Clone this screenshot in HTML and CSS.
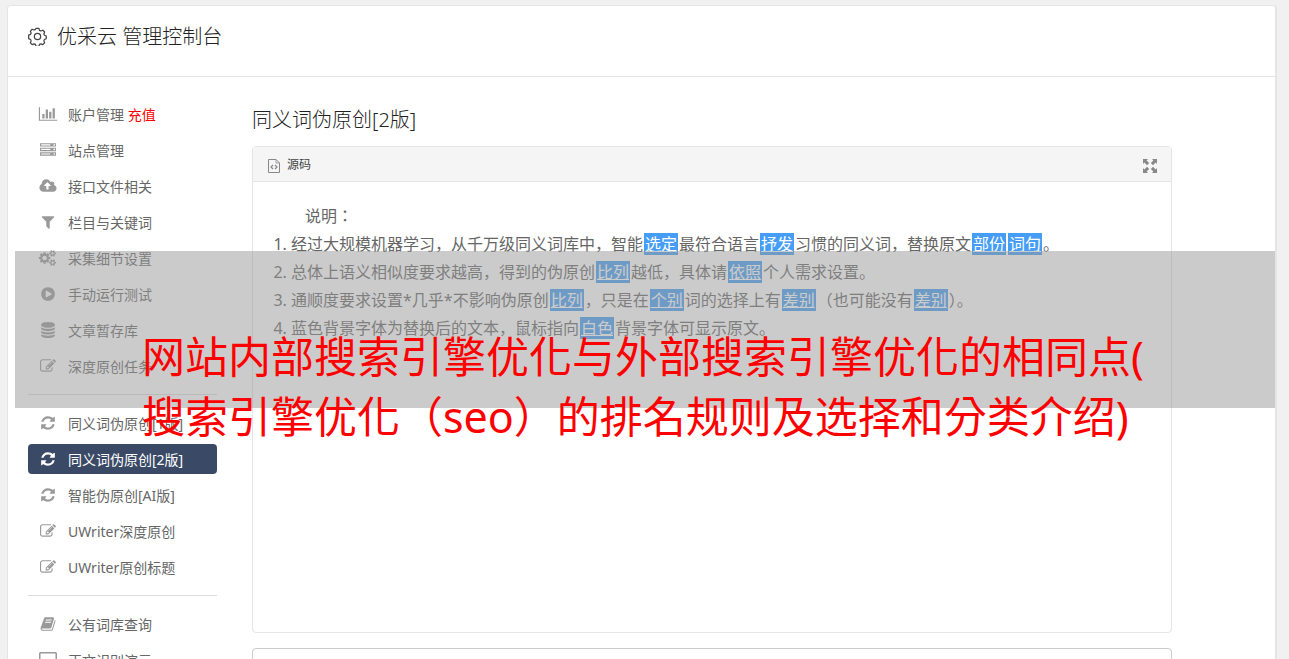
FILE: index.html
```html
<!DOCTYPE html>
<html lang="en">
<head>
    <meta charset="UTF-8">
    <meta name="viewport" content="width=device-width, initial-scale=1.0">
    <title>优采云 管理控制台</title>
    <link rel="stylesheet" href="styles.css">
</head>
<body>
    <!-- icon sprite -->
    <svg class="sprite" aria-hidden="true">
        <symbol id="i-chart" viewBox="0 0 2048 1792"><path d="M640 896v512h-256v-512h256zm384-512v1024h-256v-1024h256zm1024 1152v128h-2048v-1536h128v1408h1920zm-640-896v768h-256v-768h256zm384-384v1152h-256v-1152h256z"/></symbol>
        <symbol id="i-server" viewBox="0 0 1792 1792"><path d="M128 1408h1024v-128h-1024v128zm0-512h1024v-128h-1024v128zm1568 448q0-40-28-68t-68-28-68 28-28 68 28 68 68 28 68-28 28-68zm-1568-960h1024v-128h-1024v128zm1568 448q0-40-28-68t-68-28-68 28-28 68 28 68 68 28 68-28 28-68zm0-512q0-40-28-68t-68-28-68 28-28 68 28 68 68 28 68-28 28-68zm96 832v384h-1792v-384h1792zm0-512v384h-1792v-384h1792zm0-512v384h-1792v-384h1792z"/></symbol>
        <symbol id="i-cloud" viewBox="0 0 1920 1792"><path d="M1280 864q0-14-9-23l-352-352q-9-9-23-9t-23 9l-351 351q-10 12-10 24 0 14 9 23t23 9h224v352q0 13 9.5 22.5t22.5 9.5h192q13 0 22.5-9.5t9.5-22.5v-352h224q13 0 22.5-9.5t9.5-22.5zm640 288q0 159-112.5 271.5t-271.5 112.5h-1088q-185 0-316.5-131.5t-131.5-316.5q0-130 70-240t188-165q-2-30-2-43 0-212 150-362t362-150q156 0 285.5 87t188.5 231q71-62 166-62 106 0 181 75t75 181q0 76-41 138 130 31 213.5 135.5t83.5 238.5z"/></symbol>
        <symbol id="i-filter" viewBox="0 0 1792 1792"><path d="M1595 295q17 41-14 70l-493 493v742q0 42-39 59-13 5-25 5-27 0-45-19l-256-256q-19-19-19-45v-486l-493-493q-31-29-14-70 17-39 59-39h1280q42 0 59 39z"/></symbol>
        <symbol id="i-cogs" viewBox="0 0 1920 1792"><path d="M832 896q0-106-75-181t-181-75-181 75-75 181 75 181 181 75 181-75 75-181zm768 512q0-52-38-90t-90-38-90 38-38 90q0 53 37.5 90.5t90.5 37.5 90.5-37.5 37.5-90.5zm0-1024q0-52-38-90t-90-38-90 38-38 90q0 53 37.5 90.5t90.5 37.5 90.5-37.5 37.5-90.5zm-384 421v185q0 10-7 19.5t-16 10.5l-155 24q-11 35-32 76 34 48 90 115 7 11 7 20 0 12-7 19-23 30-82.5 89.5t-78.5 59.5q-11 0-21-7l-115-90q-37 19-77 31-11 108-23 155-7 24-30 24h-186q-11 0-20-7.5t-10-17.5l-23-153q-34-10-75-31l-118 89q-7 7-20 7-11 0-21-8-144-133-144-160 0-9 7-19 10-14 41-53t47-61q-23-44-35-82l-152-24q-10-1-17-9.5t-7-19.5v-185q0-10 7-19.5t16-10.5l155-24q11-35 32-76-34-48-90-115-7-11-7-20 0-12 7-20 22-30 82-89t79-59q11 0 21 7l115 90q34-18 77-32 11-108 23-154 7-24 30-24h186q11 0 20 7.5t10 17.5l23 153q34 10 75 31l118-89q8-7 20-7 11 0 21 8 144 133 144 160 0 8-7 19-12 16-42 54t-45 60q23 48 34 82l152 23q10 2 17 10.5t7 19.5zm640 533v140q0 16-149 31-12 27-30 52 51 113 51 138 0 4-4 7-122 71-124 71-8 0-46-47t-52-68q-20 2-30 2t-30-2q-14 21-52 68t-46 47q-2 0-124-71-4-3-4-7 0-25 51-138-18-25-30-52-149-15-149-31v-140q0-16 149-31 13-29 30-52-51-113-51-138 0-4 4-7 4-2 35-20t59-34 30-16q8 0 46 46.5t52 67.5q20-2 30-2t30 2q51-71 92-112l6-2q4 0 124 70 4 3 4 7 0 25-51 138 17 23 30 52 149 15 149 31zm0-1024v140q0 16-149 31-12 27-30 52 51 113 51 138 0 4-4 7-122 71-124 71-8 0-46-47t-52-68q-20 2-30 2t-30-2q-14 21-52 68t-46 47q-2 0-124-71-4-3-4-7 0-25 51-138-18-25-30-52-149-15-149-31v-140q0-16 149-31 13-29 30-52-51-113-51-138 0-4 4-7 4-2 35-20t59-34 30-16q8 0 46 46.5t52 67.5q20-2 30-2t30 2q51-71 92-112l6-2q4 0 124 70 4 3 4 7 0 25-51 138 17 23 30 52 149 15 149 31z"/></symbol>
        <symbol id="i-play" viewBox="0 0 1792 1792"><path d="M896 128q209 0 385.5 103t279.5 279.5 103 385.5-103 385.5-279.5 279.5-385.5 103-385.5-103-279.5-279.5-103-385.5 103-385.5 279.5-279.5 385.5-103zm384 823q32-18 32-55t-32-55l-544-320q-31-19-64-1-32 19-32 56v640q0 37 32 56 16 8 32 8 17 0 32-9z"/></symbol>
        <symbol id="i-database" viewBox="0 0 1792 1792"><path d="M896 768q237 0 443-43t325-127v170q0 69-103 128t-280 93.5-385 34.5-385-34.5-280-93.5-103-128v-170q119 84 325 127t443 43zm0 768q237 0 443-43t325-127v170q0 69-103 128t-280 93.5-385 34.5-385-34.5-280-93.5-103-128v-170q119 84 325 127t443 43zm0-384q237 0 443-43t325-127v170q0 69-103 128t-280 93.5-385 34.5-385-34.5-280-93.5-103-128v-170q119 84 325 127t443 43zm0-1152q208 0 385 34.5t280 93.5 103 128v128q0 69-103 128t-280 93.5-385 34.5-385-34.5-280-93.5-103-128v-128q0-69 103-128t280-93.5 385-34.5z"/></symbol>
        <symbol id="i-edit" viewBox="0 0 1792 1792"><path d="M888 1184l116-116-152-152-116 116v56h96v96h56zm440-720q-16-16-33 1l-350 350q-17 17-1 33t33-1l350-350q17-17 1-33zm80 594v190q0 119-84.5 203.5t-203.5 84.5h-832q-119 0-203.5-84.5t-84.5-203.5v-832q0-119 84.5-203.5t203.5-84.5h832q63 0 117 25 15 7 18 23 3 17-9 29l-49 49q-14 14-32 8-23-6-45-6h-832q-66 0-113 47t-47 113v832q0 66 47 113t113 47h832q66 0 113-47t47-113v-126q0-13 9-22l64-64q15-15 35-7t20 29zm-96-738l288 288-672 672h-288v-288zm444 132l-92 92-288-288 92-92q28-28 68-28t68 28l152 152q28 28 28 68t-28 68z"/></symbol>
        <symbol id="i-refresh" viewBox="0 0 1792 1792"><path d="M1639 1056q0 5-1 7-64 268-268 434.5t-478 166.5q-146 0-282.5-55t-243.5-157l-129 129q-19 19-45 19t-45-19-19-45v-448q0-26 19-45t45-19h448q26 0 45 19t19 45-19 45l-137 137q71 66 161 102t187 36q134 0 250-65t186-179q11-17 53-117 8-23 30-23h192q13 0 22.5 9.5t9.5 22.5zm25-800v448q0 26-19 45t-45 19h-448q-26 0-45-19t-19-45 19-45l138-138q-148-137-349-137-134 0-250 65t-186 179q-11 17-53 117-8 23-30 23h-199q-13 0-22.5-9.5t-9.5-22.5v-7q65-268 270-434.5t480-166.5q146 0 284 55.5t245 156.5l130-129q19-19 45-19t45 19 19 45z"/></symbol>
        <symbol id="i-book" viewBox="0 0 1792 1792"><path d="M1703 478q40 57 18 129l-275 906q-19 64-76.5 107.5t-122.5 43.5h-923q-77 0-148.5-53.5t-99.5-131.5q-24-67-2-127 0-4 3-27t4-37q1-8-3-21.5t-3-19.5q2-11 8-21t16.5-23.5 16.5-23.5q23-38 45-91.5t30-91.5q3-10 .5-30t-.5-28q3-11 17-28t17-23q21-36 42-92t25-90q1-9-2.5-32t.5-28q4-13 22-30.5t22-22.5q19-26 42.5-84.5t27.5-96.5q1-8-3-25.5t-2-26.5q2-8 9-18t18-23 17-21q8-12 16.5-30.5t15-35 16-36 19.5-32 26.5-23.5 36-11.5 47.5 5.5l-1 3q38-9 51-9h761q74 0 114 56t18 130l-274 906q-36 119-71.5 153.5t-128.5 34.5h-869q-27 0-38 15-11 16-1 43 24 70 144 70h923q29 0 56-15.5t35-41.5l300-987q7-22 5-57 38 15 59 43zm-1064 2q-4 13 2 22.5t20 9.5h608q13 0 25.5-9.5t16.5-22.5l21-64q4-13-2-22.5t-20-9.5h-608q-13 0-25.5 9.5t-16.5 22.5zm-83 256q-4 13 2 22.5t20 9.5h608q13 0 25.5-9.5t16.5-22.5l21-64q4-13-2-22.5t-20-9.5h-608q-13 0-25.5 9.5t-16.5 22.5z"/></symbol>
        <symbol id="i-desktop" viewBox="0 0 18 16"><path d="M1.500 0h15a1.500 1.500 0 0 1 1.500 1.500v10a1.500 1.500 0 0 1-1.500 1.500H11l1 2v1H6v-1l1-2H1.500A1.500 1.500 0 0 1 0 11.500v-10A1.500 1.500 0 0 1 1.500 0zM1.500 1.500v8.500h15V1.500z" fill-rule="evenodd"/></symbol>
        <symbol id="i-gear" viewBox="0 0 20 20"><g fill="none" stroke="currentColor" stroke-width="1.300" stroke-linejoin="round"><path d="M8.500 1.500h3l.6 2 1.500.7 2-.8 1.900 1.900-.8 2 .6 1.400 1.900.8v2.800l-1.900.9-.6 1.400.8 2-1.900 1.900-2-.8-1.500.6-.6 2h-3l-.7-2-1.400-.6-2 .8-1.900-1.900.8-2-.6-1.400-2-.9V8.500l2-.8.6-1.400-.8-2 1.900-1.900 2 .8 1.400-.7z"/><circle cx="10" cy="10" r="3.300"/></g></symbol>
        <symbol id="i-code" viewBox="0 0 12 14"><g fill="none" stroke="currentColor"><path d="M.5.5h7.500l3.500 3.500v9.500H.5z"/><path d="M8 .5V4h3.500" stroke-width=".7"/><path d="M5 6L3 8l2 2M7 6l2 2-2 2" stroke-width="1.200"/></g></symbol>
        <symbol id="i-expand" viewBox="0 0 14 14"><path d="M0 0h5L3.600 1.400 6.200 4 4 6.200 1.400 3.600 0 5zM14 0v5l-1.400-1.400L10 6.200 7.800 4l2.600-2.600L9 0zM0 14V9l1.400 1.400L4 7.800 6.200 10l-2.600 2.600L5 14zM14 14H9l1.400-1.400L7.800 10 10 7.800l2.600 2.600L14 9z"/></symbol>
    </svg>

    <div class="wrapper">
        <header class="top">
            <svg class="gear"><use href="#i-gear"/></svg>
            <h1>优采云 管理控制台</h1>
        </header>

        <div class="columns">
            <nav class="sidebar">
                <a href="#"><svg><use href="#i-chart"/></svg><span>账户管理 <b>充值</b></span></a>
                <a href="#"><svg><use href="#i-server"/></svg>站点管理</a>
                <a href="#"><svg><use href="#i-cloud"/></svg>接口文件相关</a>
                <a href="#"><svg><use href="#i-filter"/></svg>栏目与关键词</a>
                <a href="#"><svg><use href="#i-cogs"/></svg>采集细节设置</a>
                <a href="#"><svg><use href="#i-play"/></svg>手动运行测试</a>
                <a href="#"><svg><use href="#i-database"/></svg>文章暂存库</a>
                <a href="#"><svg><use href="#i-edit"/></svg>深度原创任务</a>
                <hr>
                <a href="#"><svg><use href="#i-refresh"/></svg>同义词伪原创[1版]</a>
                <a href="#" class="active"><svg><use href="#i-refresh"/></svg>同义词伪原创[2版]</a>
                <a href="#"><svg><use href="#i-refresh"/></svg>智能伪原创[AI版]</a>
                <a href="#"><svg><use href="#i-edit"/></svg>UWriter深度原创</a>
                <a href="#"><svg><use href="#i-edit"/></svg>UWriter原创标题</a>
                <hr>
                <a href="#"><svg><use href="#i-book"/></svg>公有词库查询</a>
                <a href="#"><svg><use href="#i-desktop"/></svg>正文识别演示</a>
            </nav>

            <main class="content">
                <h2>同义词伪原创[2版]</h2>

                <section class="editor">
                    <div class="toolbar">
                        <button type="button"><svg><use href="#i-code"/></svg>源码</button>
                        <button type="button" aria-label="全屏"><svg><use href="#i-expand"/></svg></button>
                    </div>
                    <div class="text">
                        <p>说明：</p>
                        <ol>
                            <li>经过大规模机器学习，从千万级同义词库中，智能<mark>选定</mark>最符合语言<mark>抒发</mark>习惯的同义词，替换原文<mark>部份</mark><mark>词句</mark>。</li>
                            <li>总体上语义相似度要求越高，得到的伪原创<mark>比列</mark>越低，具体请<mark>依照</mark>个人需求设置。</li>
                            <li>通顺度要求设置*几乎*不影响伪原创<mark>比列</mark>，只是在<mark>个别</mark>词的选择上有<mark>差别</mark>（也可能没有<mark>差别</mark>）。</li>
                            <li>蓝色背景字体为替换后的文本，鼠标指向<mark>白色</mark>背景字体可显示原文。</li>
                        </ol>
                    </div>
                </section>

                <section class="result"></section>
            </main>
        </div>
    </div>

    <!-- caption over the page -->
    <div class="banner">
        <p>网站内部搜索引擎优化与外部搜索引擎优化的相同点(<br>搜索引擎优化（seo）的排名规则及选择和分类介绍)</p>
    </div>
</body>
</html>
```
FILE: styles.css
```css
* {
    box-sizing: border-box;
}

body {
    margin: 0;
    padding: 5px 12px 0 7px;
    height: 100vh;
    overflow: hidden;
    background: #f1f1f1;
    color: #666;
    font-family: "Noto Sans", "Noto Sans CJK SC", sans-serif;
    font-size: 14px;
}

svg {
    fill: currentColor;
    flex: none;
}

.sprite {
    position: absolute;
    width: 0;
    height: 0;
}

.wrapper {
    height: 100%;
    overflow: hidden;
    background: #fff;
    border: 1px solid #e5e5e5;
    border-right-width: 2px;
    border-bottom: 0;
    border-radius: 4px 4px 0 0;
}

.top {
    display: flex;
    align-items: center;
    gap: 10px;
    height: 71px;
    padding: 0 20px 10px;
    border-bottom: 1px solid #e5e5e5;
}

.gear {
    width: 19px;
    height: 19px;
    color: #444;
}

h1,
h2 {
    margin: 0;
    font-size: 20px;
    font-weight: 300;
    line-height: 28px;
    color: #222;
}

h1 {
    padding-top: 2px;
}

.columns {
    display: flex;
    gap: 35px;
    padding: 19px 103px 0 20px;
}

.sidebar {
    flex: none;
    width: 189px;
}

.sidebar a {
    display: flex;
    align-items: center;
    gap: 10px;
    height: 30px;
    margin: 3px 0 6px;
    padding-left: 10px;
    border-radius: 4px;
    color: #666;
    text-decoration: none;
}

.sidebar svg {
    width: 20px;
    height: 16px;
    color: #999;
}

.sidebar b {
    font-weight: 400;
    color: #f00;
}

.sidebar .active,
.sidebar .active svg {
    color: #fff;
}

.sidebar .active {
    background: #3a4a66;
}

.sidebar hr {
    height: 1px;
    margin: 13px 0;
    border: 0;
    background: #ddd;
}

.content {
    flex: 1;
    padding-top: 10px;
}

.editor {
    margin-top: 12px;
    border: 1px solid #e5e5e5;
    border-radius: 4px;
}

.toolbar {
    display: flex;
    justify-content: space-between;
    align-items: center;
    height: 35px;
    padding: 0 14px;
    border-bottom: 1px solid #e5e5e5;
    background: #f5f5f5;
}

.toolbar button {
    display: flex;
    align-items: center;
    gap: 6px;
    padding: 0;
    border: 0;
    background: none;
    color: #444;
    font: inherit;
    font-size: 12px;
}

.toolbar svg {
    width: 14px;
    height: 14px;
    margin-top: 3px;
    color: #888;
}

.text {
    min-height: 450px;
    padding: 20px;
    font-size: 16px;
    line-height: 28px;
}

.text p {
    margin: 0;
    text-indent: 32px;
    font-family: "Noto Sans", "Noto Sans CJK TC", sans-serif;
}

.text ol {
    margin: 0;
    padding-left: 18px;
}

mark {
    margin: 0 1px;
    padding: 0 1px;
    background: #459df5;
    color: #fff;
    text-decoration: underline;
}

.result {
    height: 120px;
    margin-top: 15px;
    border: 1px solid #ccc;
    border-radius: 4px;
}

.banner {
    position: absolute;
    top: 251px;
    left: 15px;
    right: 14px;
    height: 157px;
    padding: 76px 0 0 127px;
    background: rgba(152, 152, 152, 0.5);
}

/* TC face keeps the full-width brackets centred */
.banner p {
    margin: 0;
    color: #f00;
    font-family: "Noto Sans", "Noto Sans CJK TC", sans-serif;
    font-size: 43px;
    line-height: 60px;
    white-space: nowrap;
}
```
